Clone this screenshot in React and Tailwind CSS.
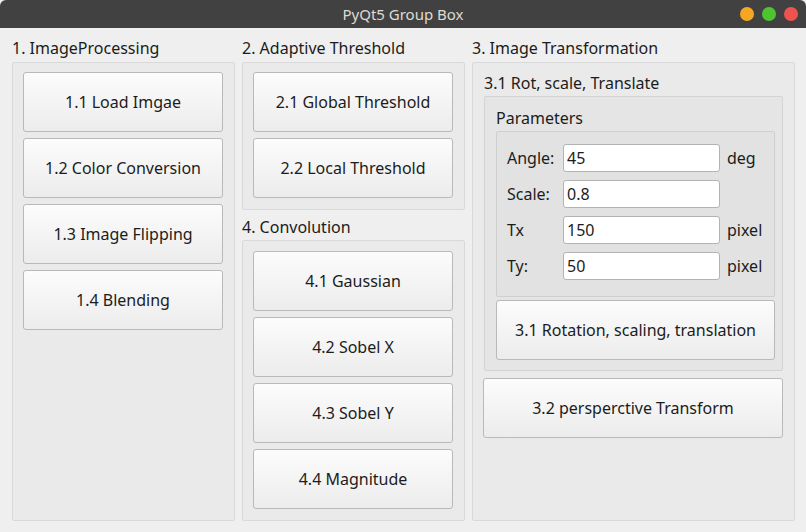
import React from "react";

const font = { fontFamily: "'Noto Sans', 'Open Sans', sans-serif" };

function QButton({ children, className = "" }) {
  return (
    <button
      className={`h-[60px] w-full shrink-0 rounded-[3px] border border-[#b9b9b9] bg-gradient-to-b from-[#fcfcfc] to-[#ececec] text-[16px] text-[#1c1c1c] ${className}`}
    >
      {children}
    </button>
  );
}

function GroupTitle({ children, className = "" }) {
  return <div className={`h-[20px] leading-[20px] text-[16px] text-[#1c1c1c] ${className}`}>{children}</div>;
}

function ParamRow({ label, value, unit }) {
  return (
    <div className="flex h-[28px] items-center">
      <span className="w-[56px] text-[16px] text-[#1c1c1c]">{label}</span>
      <input
        readOnly
        value={value}
        className="h-[28px] w-[157px] rounded-[3px] border border-[#b3b3b3] bg-white px-[3px] text-[16px] text-[#1c1c1c] outline-none"
      />
      <span className="ml-[7px] text-[16px] text-[#1c1c1c]">{unit}</span>
    </div>
  );
}

export default function App() {
  return (
    <div className="flex h-[532px] w-[806px] flex-col bg-[#efefef]" style={font}>
      {/* Title bar */}
      <div className="relative flex h-[28px] shrink-0 items-center justify-center rounded-t-[6px] bg-[#414141]">
        <span className="text-[15px] text-[#dfdbd2]">PyQt5 Group Box</span>
        <div className="absolute right-[8px] top-[7px] flex gap-[8px]">
          <span className="h-[14px] w-[14px] rounded-full bg-[#f5a623]" />
          <span className="h-[14px] w-[14px] rounded-full bg-[#4fc431]" />
          <span className="h-[14px] w-[14px] rounded-full bg-[#ef5350]" />
        </div>
      </div>

      {/* Body */}
      <div className="flex flex-1 gap-[7px] pb-[11px] pl-[12px] pt-[10px]">
        {/* Column 1 */}
        <div className="flex w-[223px] flex-col">
          <GroupTitle className="mb-[4px]">1. ImageProcessing</GroupTitle>
          <div className="flex flex-1 flex-col gap-[6px] rounded-[2px] border border-[#d9d9d9] bg-[#eaeaea] pl-[10px] pr-[11px] pt-[9px]">
            <QButton>1.1 Load Imgae</QButton>
            <QButton>1.2 Color Conversion</QButton>
            <QButton>1.3 Image Flipping</QButton>
            <QButton>1.4 Blending</QButton>
          </div>
        </div>

        {/* Column 2 */}
        <div className="flex w-[223px] flex-col">
          <GroupTitle className="mb-[4px]">2. Adaptive Threshold</GroupTitle>
          <div className="flex flex-col gap-[6px] rounded-[2px] border border-[#d9d9d9] bg-[#eaeaea] pb-[11px] pl-[10px] pr-[11px] pt-[9px]">
            <QButton>2.1 Global Threshold</QButton>
            <QButton>2.2 Local Threshold</QButton>
          </div>
          <GroupTitle className="mb-[3px] mt-[7px]">4. Convolution</GroupTitle>
          <div className="flex flex-1 flex-col gap-[6px] rounded-[2px] border border-[#d9d9d9] bg-[#eaeaea] pl-[10px] pr-[11px] pt-[10px]">
            <QButton>4.1 Gaussian</QButton>
            <QButton>4.2 Sobel X</QButton>
            <QButton>4.3 Sobel Y</QButton>
            <QButton>4.4 Magnitude</QButton>
          </div>
        </div>

        {/* Column 3 */}
        <div className="flex w-[323px] flex-col">
          <GroupTitle className="mb-[4px]">3. Image Transformation</GroupTitle>
          <div className="flex flex-1 flex-col rounded-[2px] border border-[#d9d9d9] bg-[#eaeaea] pl-[10px] pr-[11px] pt-[10px]">
            <GroupTitle className="ml-[1px] mb-[3px]">3.1 Rot, scale, Translate</GroupTitle>
            <div className="ml-[1px] flex flex-col rounded-[2px] border border-[#d3d3d3] bg-[#e5e5e5] pb-[10px] pl-[11px] pr-[7px] pt-[11px]">
              <GroupTitle className="mb-[3px]">Parameters</GroupTitle>
              <div className="flex flex-col gap-[8px] rounded-[2px] border border-[#cfcfcf] bg-[#e2e2e2] pb-[16px] pl-[10px] pt-[12px]">
                <ParamRow label="Angle:" value="45" unit="deg" />
                <ParamRow label="Scale:" value="0.8" unit="" />
                <ParamRow label="Tx" value="150" unit="pixel" />
                <ParamRow label="Ty:" value="50" unit="pixel" />
              </div>
              <QButton className="mt-[3px]">3.1 Rotation, scaling, translation</QButton>
            </div>
            <QButton className="mt-[7px]">3.2 persperctive Transform</QButton>
          </div>
        </div>
      </div>
    </div>
  );
}
